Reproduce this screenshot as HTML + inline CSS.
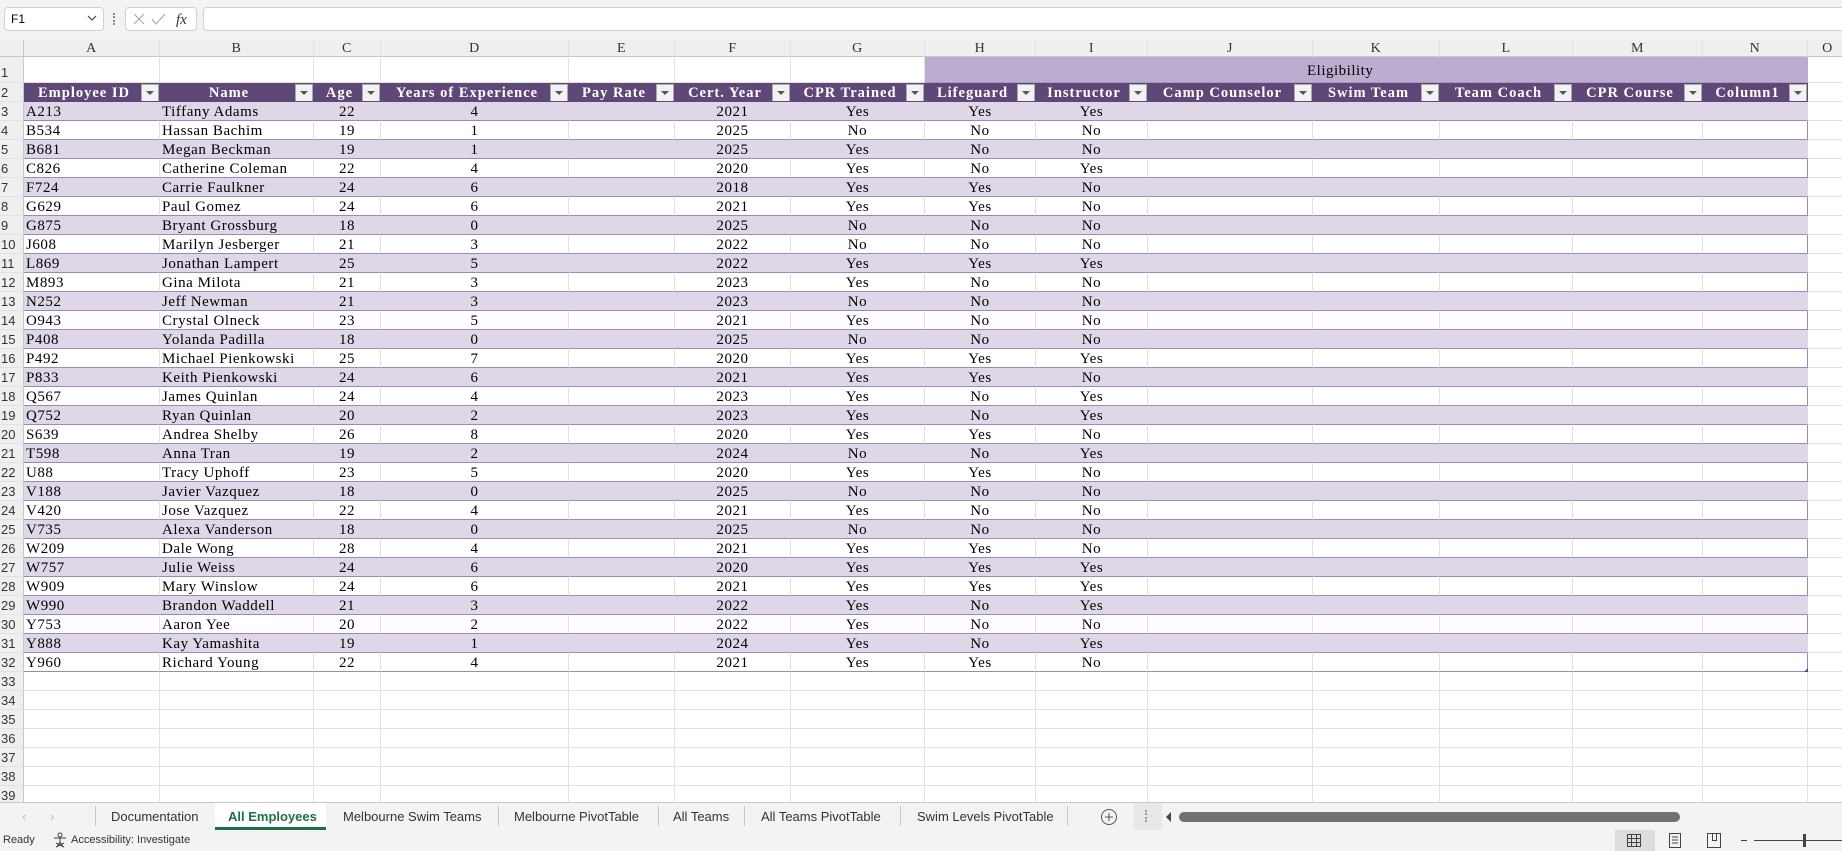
<!DOCTYPE html>
<html><head><meta charset="utf-8"><style>
*{box-sizing:border-box;margin:0;padding:0}
body{width:1842px;height:851px;overflow:hidden;background:#fff;position:relative;font-family:"Liberation Serif",serif;font-size:15px;color:#000}
.top{position:absolute;left:0;top:0;width:1842px;height:40px;background:#f3f3f3}
.nb{position:absolute;left:4px;top:7px;width:100px;height:24px;background:#fff;border:1px solid #d0d0d0;border-radius:4px;font:12px "Liberation Sans",sans-serif;padding:4px 6px}
.fxb{position:absolute;left:125px;top:7px;width:72px;height:24px;background:#fff;border:1px solid #d0d0d0;border-radius:4px}
.fin{position:absolute;left:203px;top:7px;width:1645px;height:24px;background:#fff;border:1px solid #d0d0d0;border-radius:4px}
.grid{position:absolute;left:0;top:40px}
.r{display:flex;height:19px}
.r>span{display:block;height:100%;border-right:1px solid #e1e1e1;border-bottom:1px solid #e1e1e1;white-space:nowrap;overflow:hidden;padding:0 2px;line-height:21px;flex:none;letter-spacing:.55px}
.r>span:nth-child(1){width:24px;background:#efefef;border-right:1px solid #c8c8c8;font:13px "Liberation Sans",sans-serif;line-height:20px;padding-left:1px;color:#333;letter-spacing:0}
.r>span:nth-child(2){width:136px}
.r>span:nth-child(3){width:154px}
.r>span:nth-child(4){width:67px;text-align:center}
.r>span:nth-child(5){width:188px;text-align:center}
.r>span:nth-child(6){width:106px}
.r>span:nth-child(7){width:116px;text-align:center}
.r>span:nth-child(8){width:134px;text-align:center}
.r>span:nth-child(9){width:111px;text-align:center}
.r>span:nth-child(10){width:112px;text-align:center}
.r>span:nth-child(11){width:165px}
.r>span:nth-child(12){width:127px}
.r>span:nth-child(13){width:133px}
.r>span:nth-child(14){width:130px}
.r>span:nth-child(15){width:105px}
.r>span:nth-child(16){width:40px}
.ch{height:17px}
.ch>span{background:#efefef;text-align:center!important;border-bottom:1px solid #c8c8c8!important;font-size:14px;color:#333;line-height:17px!important}
.r1{height:26px}
.r1>span{line-height:32px!important}
.r1>span:nth-child(n+9):nth-child(-n+15){background:#bcadd0;border-right-color:#bcadd0;border-bottom-color:#a996c2}
.t>span:nth-child(n+2):nth-child(-n+15){border-bottom:1px solid #9d88b8}
.t>span:nth-child(15){border-right:1px solid #9d88b8}
.b>span:nth-child(n+2):nth-child(-n+15){background:#dfd7e8;border-right-color:#dfd7e8}
.b>span:nth-child(15){border-right-color:#9d88b8}
.h{height:19px}
.h>span:nth-child(n+2):nth-child(-n+15){background:#5f4878;color:#fff;font-weight:bold;border-right:none;border-bottom:1px solid #5f4878;position:relative;text-align:center;padding-right:18px;letter-spacing:1px;font-size:14.5px;line-height:20px}
.h>span:nth-child(n+2):nth-child(-n+15)::after{content:"";position:absolute;right:1px;top:1px;width:16px;height:16px;background:#f2f2f2;border:1px solid #aaa}
.h>span:nth-child(n+2):nth-child(-n+15)::before{content:"";position:absolute;right:6px;top:8px;border-left:4px solid transparent;border-right:4px solid transparent;border-top:4px solid #555;z-index:2}
.h>span:nth-child(6){text-align:right}
.tabs{position:absolute;left:0;top:802px;width:1842px;height:28px;background:#f3f3f3;border-top:1px solid #c8c8c8;font:13px "Liberation Sans",sans-serif;color:#333}
.tabs div{position:absolute;top:6px}
.sep{position:absolute;top:3px;width:1px;height:20px;background:#c8c8c8}
.status{position:absolute;left:0;top:830px;width:1842px;height:21px;background:#f3f3f3;font:11px "Liberation Sans",sans-serif;color:#333}
</style></head><body>
<div class="top">
<div class="nb">F1<svg style="position:absolute;right:6px;top:7px" width="10" height="7"><path d="M1 1l4 4 4-4" fill="none" stroke="#444" stroke-width="1.2"/></svg></div>
<div style="position:absolute;left:113px;top:13px;width:2px;height:12px;border-left:2px dotted #888"></div>
<div class="fxb"><svg width="70" height="22"><path d="M8 6l10 10M18 6L8 16" stroke="#aaa" stroke-width="1.2"/><path d="M26 11l4 5 9-10" fill="none" stroke="#aaa" stroke-width="1.2"/><text x="50" y="16" font-family="Liberation Serif" font-style="italic" font-size="15" fill="#333">fx</text></svg></div>
<div class="fin"></div>
</div>
<div class="grid">
<div class="r ch"><span></span><span>A</span><span>B</span><span>C</span><span>D</span><span>E</span><span>F</span><span>G</span><span>H</span><span>I</span><span>J</span><span>K</span><span>L</span><span>M</span><span>N</span><span>O</span></div>
<div class="r r1"><span>1</span><span></span><span></span><span></span><span></span><span></span><span></span><span></span><span></span><span></span><span></span><span></span><span></span><span></span><span></span><span></span></div>
<div class="r h"><span>2</span><span>Employee ID</span><span>Name</span><span>Age</span><span>Years of Experience</span><span>Pay Rate</span><span>Cert. Year</span><span>CPR Trained</span><span>Lifeguard</span><span>Instructor</span><span>Camp Counselor</span><span>Swim Team</span><span>Team Coach</span><span>CPR Course</span><span>Column1</span><span></span></div>
<div class="r t b"><span>3</span><span>A213</span><span>Tiffany Adams</span><span>22</span><span>4</span><span></span><span>2021</span><span>Yes</span><span>Yes</span><span>Yes</span><span></span><span></span><span></span><span></span><span></span><span></span></div>
<div class="r t"><span>4</span><span>B534</span><span>Hassan Bachim</span><span>19</span><span>1</span><span></span><span>2025</span><span>No</span><span>No</span><span>No</span><span></span><span></span><span></span><span></span><span></span><span></span></div>
<div class="r t b"><span>5</span><span>B681</span><span>Megan Beckman</span><span>19</span><span>1</span><span></span><span>2025</span><span>Yes</span><span>No</span><span>No</span><span></span><span></span><span></span><span></span><span></span><span></span></div>
<div class="r t"><span>6</span><span>C826</span><span>Catherine Coleman</span><span>22</span><span>4</span><span></span><span>2020</span><span>Yes</span><span>No</span><span>Yes</span><span></span><span></span><span></span><span></span><span></span><span></span></div>
<div class="r t b"><span>7</span><span>F724</span><span>Carrie Faulkner</span><span>24</span><span>6</span><span></span><span>2018</span><span>Yes</span><span>Yes</span><span>No</span><span></span><span></span><span></span><span></span><span></span><span></span></div>
<div class="r t"><span>8</span><span>G629</span><span>Paul Gomez</span><span>24</span><span>6</span><span></span><span>2021</span><span>Yes</span><span>Yes</span><span>No</span><span></span><span></span><span></span><span></span><span></span><span></span></div>
<div class="r t b"><span>9</span><span>G875</span><span>Bryant Grossburg</span><span>18</span><span>0</span><span></span><span>2025</span><span>No</span><span>No</span><span>No</span><span></span><span></span><span></span><span></span><span></span><span></span></div>
<div class="r t"><span>10</span><span>J608</span><span>Marilyn Jesberger</span><span>21</span><span>3</span><span></span><span>2022</span><span>No</span><span>No</span><span>No</span><span></span><span></span><span></span><span></span><span></span><span></span></div>
<div class="r t b"><span>11</span><span>L869</span><span>Jonathan Lampert</span><span>25</span><span>5</span><span></span><span>2022</span><span>Yes</span><span>Yes</span><span>Yes</span><span></span><span></span><span></span><span></span><span></span><span></span></div>
<div class="r t"><span>12</span><span>M893</span><span>Gina Milota</span><span>21</span><span>3</span><span></span><span>2023</span><span>Yes</span><span>No</span><span>No</span><span></span><span></span><span></span><span></span><span></span><span></span></div>
<div class="r t b"><span>13</span><span>N252</span><span>Jeff Newman</span><span>21</span><span>3</span><span></span><span>2023</span><span>No</span><span>No</span><span>No</span><span></span><span></span><span></span><span></span><span></span><span></span></div>
<div class="r t"><span>14</span><span>O943</span><span>Crystal Olneck</span><span>23</span><span>5</span><span></span><span>2021</span><span>Yes</span><span>No</span><span>No</span><span></span><span></span><span></span><span></span><span></span><span></span></div>
<div class="r t b"><span>15</span><span>P408</span><span>Yolanda Padilla</span><span>18</span><span>0</span><span></span><span>2025</span><span>No</span><span>No</span><span>No</span><span></span><span></span><span></span><span></span><span></span><span></span></div>
<div class="r t"><span>16</span><span>P492</span><span>Michael Pienkowski</span><span>25</span><span>7</span><span></span><span>2020</span><span>Yes</span><span>Yes</span><span>Yes</span><span></span><span></span><span></span><span></span><span></span><span></span></div>
<div class="r t b"><span>17</span><span>P833</span><span>Keith Pienkowski</span><span>24</span><span>6</span><span></span><span>2021</span><span>Yes</span><span>Yes</span><span>No</span><span></span><span></span><span></span><span></span><span></span><span></span></div>
<div class="r t"><span>18</span><span>Q567</span><span>James Quinlan</span><span>24</span><span>4</span><span></span><span>2023</span><span>Yes</span><span>No</span><span>Yes</span><span></span><span></span><span></span><span></span><span></span><span></span></div>
<div class="r t b"><span>19</span><span>Q752</span><span>Ryan Quinlan</span><span>20</span><span>2</span><span></span><span>2023</span><span>Yes</span><span>No</span><span>Yes</span><span></span><span></span><span></span><span></span><span></span><span></span></div>
<div class="r t"><span>20</span><span>S639</span><span>Andrea Shelby</span><span>26</span><span>8</span><span></span><span>2020</span><span>Yes</span><span>Yes</span><span>No</span><span></span><span></span><span></span><span></span><span></span><span></span></div>
<div class="r t b"><span>21</span><span>T598</span><span>Anna Tran</span><span>19</span><span>2</span><span></span><span>2024</span><span>No</span><span>No</span><span>Yes</span><span></span><span></span><span></span><span></span><span></span><span></span></div>
<div class="r t"><span>22</span><span>U88</span><span>Tracy Uphoff</span><span>23</span><span>5</span><span></span><span>2020</span><span>Yes</span><span>Yes</span><span>No</span><span></span><span></span><span></span><span></span><span></span><span></span></div>
<div class="r t b"><span>23</span><span>V188</span><span>Javier Vazquez</span><span>18</span><span>0</span><span></span><span>2025</span><span>No</span><span>No</span><span>No</span><span></span><span></span><span></span><span></span><span></span><span></span></div>
<div class="r t"><span>24</span><span>V420</span><span>Jose Vazquez</span><span>22</span><span>4</span><span></span><span>2021</span><span>Yes</span><span>No</span><span>No</span><span></span><span></span><span></span><span></span><span></span><span></span></div>
<div class="r t b"><span>25</span><span>V735</span><span>Alexa Vanderson</span><span>18</span><span>0</span><span></span><span>2025</span><span>No</span><span>No</span><span>No</span><span></span><span></span><span></span><span></span><span></span><span></span></div>
<div class="r t"><span>26</span><span>W209</span><span>Dale Wong</span><span>28</span><span>4</span><span></span><span>2021</span><span>Yes</span><span>Yes</span><span>No</span><span></span><span></span><span></span><span></span><span></span><span></span></div>
<div class="r t b"><span>27</span><span>W757</span><span>Julie Weiss</span><span>24</span><span>6</span><span></span><span>2020</span><span>Yes</span><span>Yes</span><span>Yes</span><span></span><span></span><span></span><span></span><span></span><span></span></div>
<div class="r t"><span>28</span><span>W909</span><span>Mary Winslow</span><span>24</span><span>6</span><span></span><span>2021</span><span>Yes</span><span>Yes</span><span>Yes</span><span></span><span></span><span></span><span></span><span></span><span></span></div>
<div class="r t b"><span>29</span><span>W990</span><span>Brandon Waddell</span><span>21</span><span>3</span><span></span><span>2022</span><span>Yes</span><span>No</span><span>Yes</span><span></span><span></span><span></span><span></span><span></span><span></span></div>
<div class="r t"><span>30</span><span>Y753</span><span>Aaron Yee</span><span>20</span><span>2</span><span></span><span>2022</span><span>Yes</span><span>No</span><span>No</span><span></span><span></span><span></span><span></span><span></span><span></span></div>
<div class="r t b"><span>31</span><span>Y888</span><span>Kay Yamashita</span><span>19</span><span>1</span><span></span><span>2024</span><span>Yes</span><span>No</span><span>Yes</span><span></span><span></span><span></span><span></span><span></span><span></span></div>
<div class="r t"><span>32</span><span>Y960</span><span>Richard Young</span><span>22</span><span>4</span><span></span><span>2021</span><span>Yes</span><span>Yes</span><span>No</span><span></span><span></span><span></span><span></span><span></span><span></span></div>
<div class="r"><span>33</span><span></span><span></span><span></span><span></span><span></span><span></span><span></span><span></span><span></span><span></span><span></span><span></span><span></span><span></span><span></span></div>
<div class="r"><span>34</span><span></span><span></span><span></span><span></span><span></span><span></span><span></span><span></span><span></span><span></span><span></span><span></span><span></span><span></span><span></span></div>
<div class="r"><span>35</span><span></span><span></span><span></span><span></span><span></span><span></span><span></span><span></span><span></span><span></span><span></span><span></span><span></span><span></span><span></span></div>
<div class="r"><span>36</span><span></span><span></span><span></span><span></span><span></span><span></span><span></span><span></span><span></span><span></span><span></span><span></span><span></span><span></span><span></span></div>
<div class="r"><span>37</span><span></span><span></span><span></span><span></span><span></span><span></span><span></span><span></span><span></span><span></span><span></span><span></span><span></span><span></span><span></span></div>
<div class="r"><span>38</span><span></span><span></span><span></span><span></span><span></span><span></span><span></span><span></span><span></span><span></span><span></span><span></span><span></span><span></span><span></span></div>
<div class="r"><span>39</span><span></span><span></span><span></span><span></span><span></span><span></span><span></span><span></span><span></span><span></span><span></span><span></span><span></span><span></span><span></span></div>
</div>
<div style="position:absolute;left:1307px;top:63px;font-size:15px;letter-spacing:.5px">Eligibility</div>
<div style="position:absolute;left:1804px;top:668px;border-left:4px solid transparent;border-bottom:4px solid #5f4878"></div>
<div class="tabs">
<div style="left:22px;color:#bbb">&#8249;</div><div style="left:50px;color:#bbb">&#8250;</div>
<span class="sep" style="left:95px"></span>
<div style="left:111px">Documentation</div>
<div style="left:215px;top:0;width:111px;height:27px;background:#fff;border-bottom:3px solid #1e7145"></div>
<div style="left:228px;color:#1e7145;font-weight:bold">All Employees</div>
<div style="left:343px">Melbourne Swim Teams</div>
<span class="sep" style="left:498px"></span>
<div style="left:514px">Melbourne PivotTable</div>
<span class="sep" style="left:658px"></span>
<div style="left:673px">All Teams</div>
<span class="sep" style="left:744px"></span>
<div style="left:761px">All Teams PivotTable</div>
<span class="sep" style="left:900px"></span>
<div style="left:917px">Swim Levels PivotTable</div>
<span class="sep" style="left:1067px"></span>
<svg style="position:absolute;left:1100px;top:5px" width="18" height="18"><circle cx="9" cy="9" r="7.5" fill="none" stroke="#555"/><path d="M9 5v8M5 9h8" stroke="#555"/></svg>
<div style="left:1134px;top:0;width:28px;height:27px;background:#e8e8e8"></div>
<div style="left:1145px;top:7px;height:12px;border-left:2px dotted #999"></div>
<div style="left:1166px;top:9px;border-top:5px solid transparent;border-bottom:5px solid transparent;border-right:5px solid #444"></div>
<div style="left:1179px;top:9px;width:501px;height:10px;background:#707070;border-radius:5px"></div>
</div>
<div class="status">
<span style="position:absolute;left:3px;top:4px">Ready</span>
<svg style="position:absolute;left:52px;top:2px" width="16" height="16"><circle cx="8" cy="3" r="2" fill="none" stroke="#444"/><path d="M2 6h12M8 6v4M5 15l3-5 3 5M4 11l8 4M12 11l-8 4" fill="none" stroke="#444"/></svg>
<span style="position:absolute;left:71px;top:4px">Accessibility: Investigate</span>
<div style="position:absolute;left:1615px;top:0;width:40px;height:21px;background:#ddd"></div>
<svg style="position:absolute;left:1627px;top:4px" width="14" height="13"><path d="M.5 .5h13v12H.5zM.5 4.5h13M.5 8.5h13M4.5 .5v12M9.5 .5v12" fill="none" stroke="#444"/></svg>
<svg style="position:absolute;left:1669px;top:3px" width="12" height="15"><path d="M.5 .5h11v14H.5zM3 4h6M3 7h6M3 10h6" fill="none" stroke="#444"/></svg>
<svg style="position:absolute;left:1707px;top:3px" width="14" height="15"><path d="M.5 .5h13v14H.5zM5.5 .5v7h4v-7" fill="none" stroke="#444"/></svg>
<div style="position:absolute;left:1741px;top:10px;width:6px;height:1px;background:#444"></div>
<div style="position:absolute;left:1754px;top:10px;width:88px;height:1px;background:#444"></div>
<div style="position:absolute;left:1803px;top:4px;width:3px;height:13px;background:#444"></div>
</div>
</body></html>
